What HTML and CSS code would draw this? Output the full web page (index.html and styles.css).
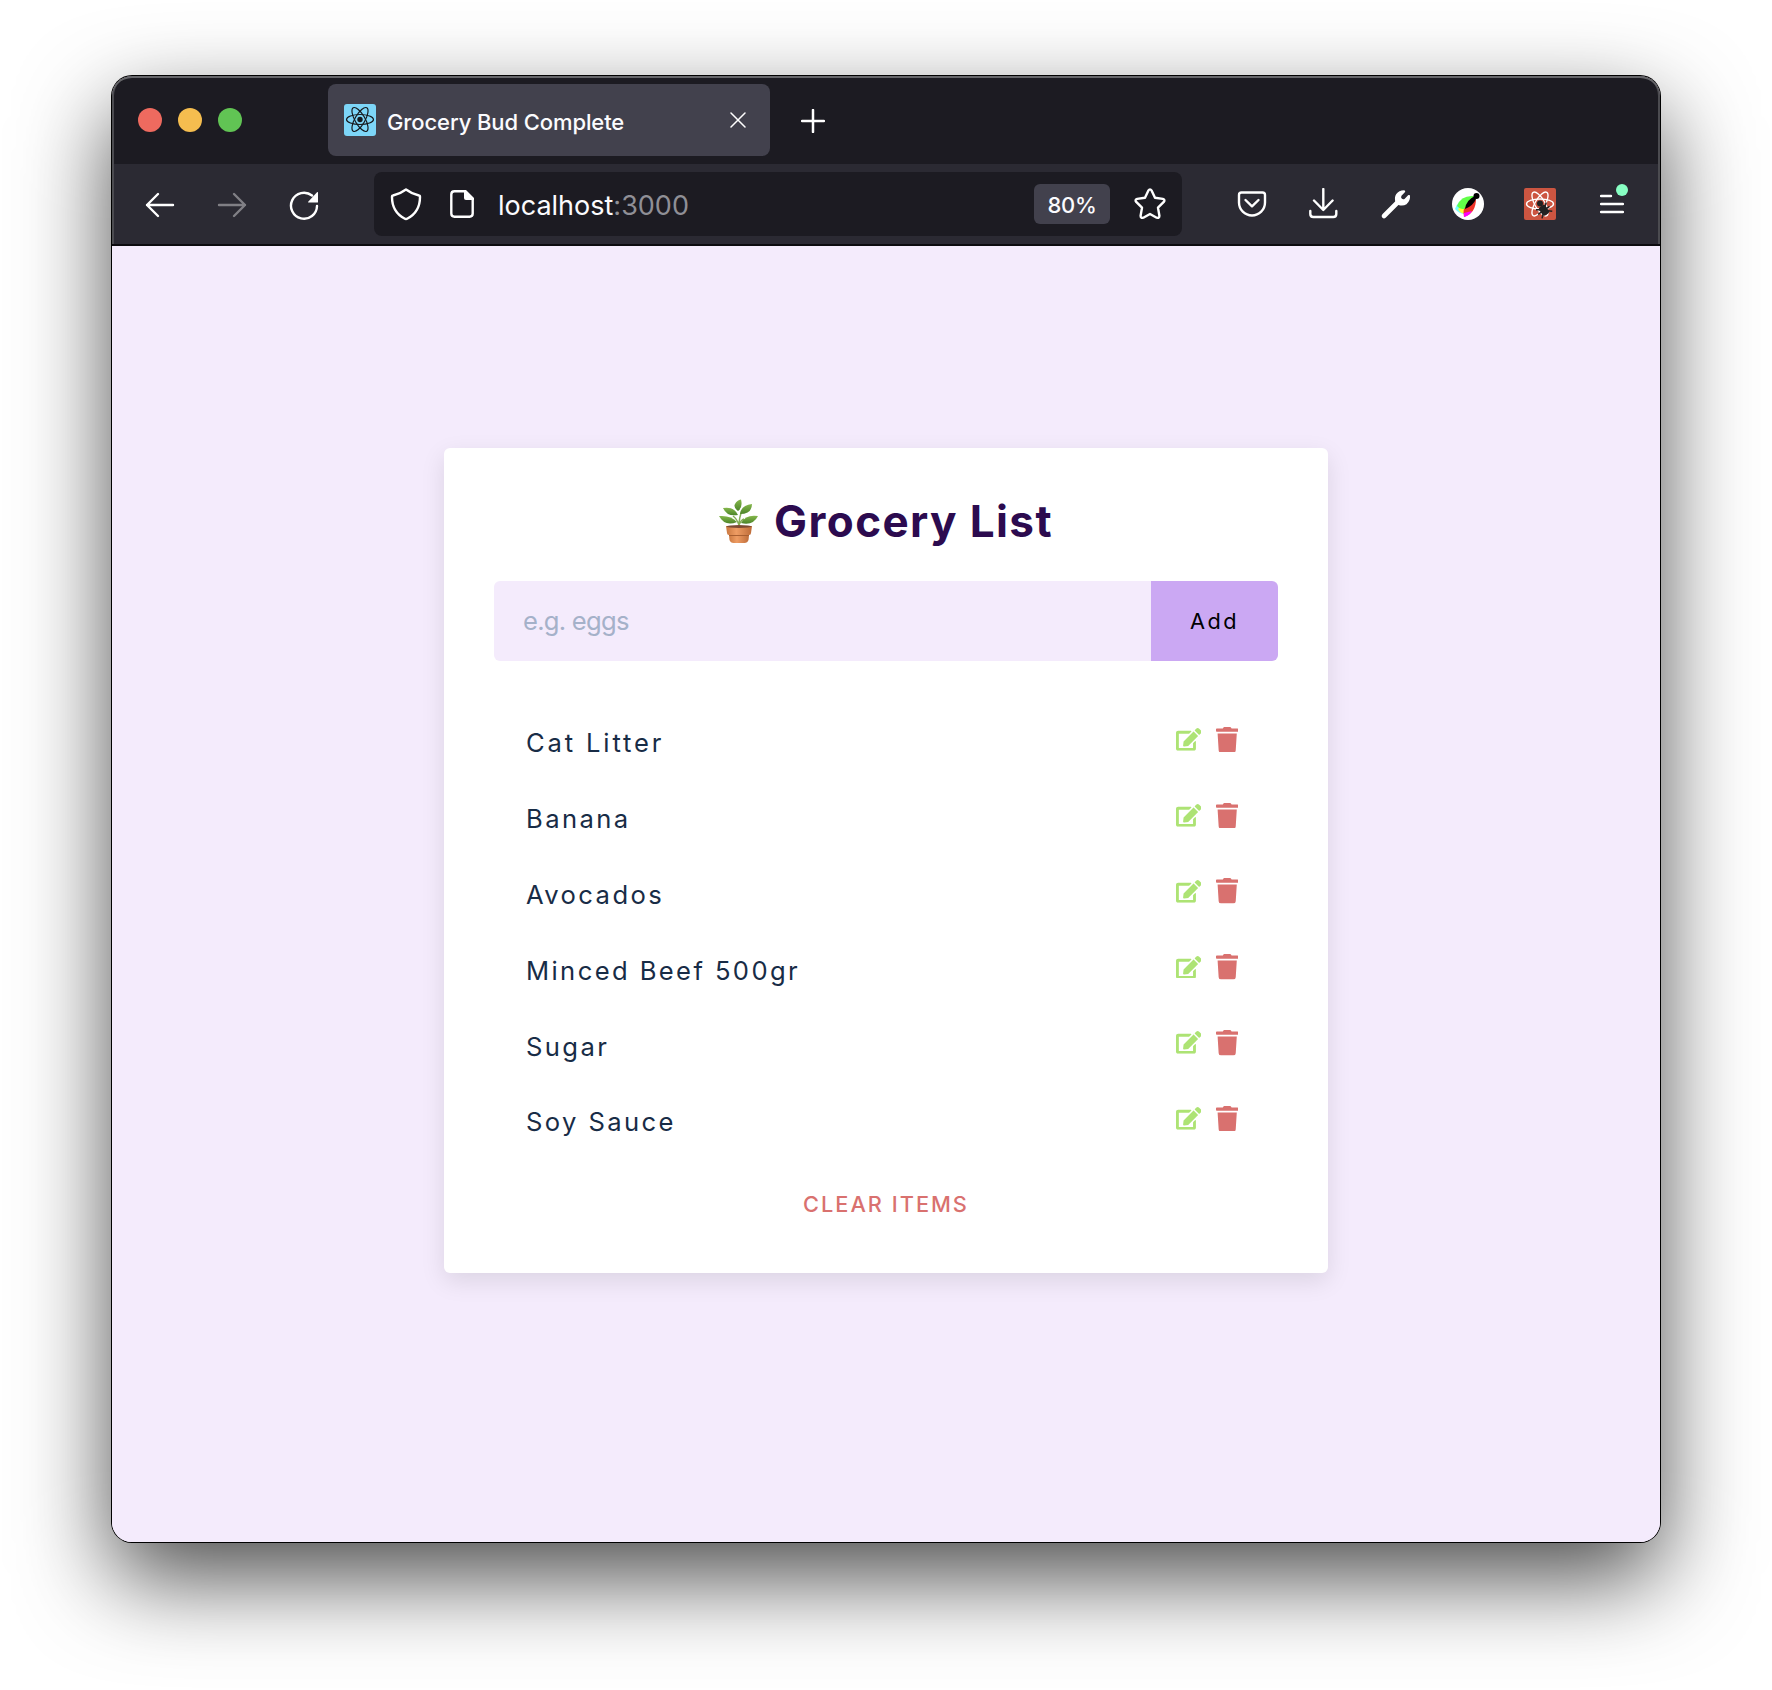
FILE: index.html
```html
<!DOCTYPE html>
<html lang="en">
<head>
<meta charset="utf-8">
<title>Grocery Bud Complete</title>
<link rel="stylesheet" href="styles.css">
</head>
<body>
<svg class="defs" width="0" height="0" aria-hidden="true">
  <symbol id="edit" viewBox="0 0 576 512"><path d="M402.6 83.2l90.2 90.2c3.8 3.8 3.8 10 0 13.8L274.4 405.6l-92.8 10.3c-12.4 1.4-22.9-9.1-21.5-21.5l10.3-92.8L388.8 83.2c3.8-3.8 10-3.8 13.8 0zm162-22.9l-48.8-48.8c-15.2-15.2-39.9-15.2-55.2 0l-35.4 35.4c-3.8 3.8-3.8 10 0 13.8l90.2 90.2c3.8 3.8 10 3.8 13.8 0l35.4-35.4c15.2-15.3 15.2-40 0-55.2zM384 346.2V448H64V128h229.8c3.2 0 6.2-1.3 8.5-3.5l40-40c7.6-7.6 2.2-20.5-8.5-20.5H48C21.5 64 0 85.500 0 112v352c0 26.500 21.500 48 48 48h352c26.500 0 48-21.500 48-48V306.200c0-10.700-12.900-16-20.500-8.500l-40 40c-2.200 2.300-3.500 5.300-3.500 8.500z"/></symbol>
  <symbol id="trash" viewBox="0 0 448 512"><path d="M432 32H312l-9.4-18.7A24 24 0 0 0 281.1 0H166.8a23.72 23.72 0 0 0-21.4 13.3L136 32H16A16 16 0 0 0 0 48v32a16 16 0 0 0 16 16h416a16 16 0 0 0 16-16V48a16 16 0 0 0-16-16zM53.2 467a48 48 0 0 0 47.900 45h245.800a48 48 0 0 0 47.900-45L416 128H32z"/></symbol>
</svg>
<div class="window">
  <header class="tabstrip">
    <div class="lights"><i class="light red"></i><i class="light yellow"></i><i class="light green"></i></div>
    <div class="tab">
      <svg class="favicon" width="32" height="32" viewBox="0 0 32 32"><rect width="32" height="32" rx="3" fill="#7dd6f8"/><g fill="none" stroke="#16191d" stroke-width="1.200"><ellipse cx="16" cy="15.500" rx="13.500" ry="5"/><ellipse cx="16" cy="15.500" rx="13.500" ry="5" transform="rotate(60 16 15.500)"/><ellipse cx="16" cy="15.500" rx="13.500" ry="5" transform="rotate(120 16 15.500)"/></g><circle cx="16" cy="15.500" r="2.700" fill="#16191d"/></svg>
      <span class="tab-title">Grocery Bud Complete</span>
      <svg class="close" width="16" height="16" viewBox="0 0 16 16"><path d="M1 1l14 14M15 1L1 15" stroke="#fff" stroke-width="1.500" stroke-linecap="round"/></svg>
    </div>
    <svg class="plus" width="24" height="24" viewBox="0 0 24 24"><path d="M12 1v22M1 12h22" stroke="#fff" stroke-width="2.500" stroke-linecap="round"/></svg>
  </header>
  <nav class="toolbar">
    <div class="nav-buttons">
      <svg width="32" height="32" viewBox="0 0 32 32"><path d="M29 16H3M14 5L3 16l11 11" class="line"/></svg>
      <svg width="32" height="32" viewBox="0 0 32 32" opacity=".4"><path d="M3 16h26M18 5l11 11-11 11" class="line"/></svg>
      <svg width="32" height="32" viewBox="0 0 32 32"><path d="M29 17A13 13 0 1 1 24 6.500" class="line"/><path d="M30 3.500V13q0 .5-.5.500H20.500q-1 0-.3-.8L29 3.300q1-.8 1 .2z" fill="#fff"/></svg>
    </div>
    <div class="urlbar">
      <svg width="32" height="34" viewBox="0 0 32 34"><path d="M16 2.500Q22 7 29 8.500q1 0 1 1.500c0 9-4 17-12.500 21.500q-1.500 1-3 0C6 27 2 19 2 10q0-1.500 1-1.500Q10 7 16 2.500z" class="line"/></svg>
      <svg class="doc" width="24" height="28" viewBox="0 0 24 28"><path d="M14 1.300H4.500Q1.300 1.300 1.300 4.500v19q0 3.200 3.200 3.200h15q3.200 0 3.200-3.200V10" class="line"/><path d="M14 0h2l8 8v2H16q-2 0-2-2z" fill="#fff"/></svg>
      <span class="url">localhost<span class="port">:3000</span></span>
      <span class="zoom">80%</span>
      <svg class="star" width="32" height="32" viewBox="0 0 32 32"><path d="M14.300 2.700q1.700-2.600 3.400 0l3.300 7 7.800 1.200q2.700.8 1 3l-5.800 5.800 1.400 8q0 2.800-2.700 2L16 26l-6.700 3.700q-2.700.8-2.700-2l1.400-8-5.800-5.800q-1.700-2.200 1-3L11 9.700z" class="line"/></svg>
    </div>
    <div class="actions">
      <svg width="32" height="32" viewBox="0 0 32 32"><path d="M5.500 4.500h21q2.500 0 2.500 2.500v7.500a13 13 0 0 1-26 0V7q0-2.500 2.500-2.500z" class="line"/><path d="M9.500 12l6.500 6.300 6.500-6.300" class="line"/></svg>
      <svg width="32" height="32" viewBox="0 0 32 32"><path d="M15.300 1v20M6 12.500L15.300 22l9.300-9.500M2.300 23v3q0 3 3 3h20q3 0 3-3v-3" class="line"/></svg>
      <svg width="32" height="32" viewBox="0 0 32 32"><path d="M4 28L18 14" stroke="#fff" stroke-width="4.600" stroke-linecap="round"/><path d="M24.500 2.200Q19 2 16.300 6q-2.300 3.500-.8 8.300l3 2.700q4.500 1.500 8-.8Q30.500 13 30 7.300l-1.700-.3-3.800 4q-1.500.8-2.800-.4-1.200-1.300-.2-2.900l3.800-4z" fill="#fff"/></svg>
      <svg width="32" height="32" viewBox="0 0 32 32"><circle cx="16" cy="16" r="16" fill="#fff"/><path d="M3 21Q7 9 23 8L15 26Q8 27 3 21z" fill="#7ff"/><path d="M6 21l9-5 1 9q-7 2-10-4z" fill="#ff3"/><path d="M5 18Q9 7 22 8l-7 13q-6 1-10-3z" fill="#62ff48"/><path d="M24 11q0 14-12 18-2-9 4-12z" fill="#ef3328"/><path d="M12 25l8-2q-3 5-8 6z" fill="#f0f"/><path d="M13 21Q14 12 23 8l1 3q-3 7-11 10z"/><circle cx="24.500" cy="8" r="3"/></svg>
      <svg width="32" height="32" viewBox="0 0 32 32"><rect width="32" height="32" rx="2" fill="#cc5541"/><g fill="none" stroke="#fff" stroke-width="1.400"><ellipse cx="16" cy="16" rx="13.500" ry="5"/><ellipse cx="16" cy="16" rx="13.500" ry="5" transform="rotate(60 16 16)"/><ellipse cx="16" cy="16" rx="13.500" ry="5" transform="rotate(120 16 16)"/></g><circle cx="16" cy="15.500" r="3" fill="#222"/><g transform="rotate(-35 19.500 22)" fill="#222"><rect x="16" y="17.500" width="7.500" height="10" rx="2.500"/><path d="M13.500 17.500l3.500 2.500M26 17.500l-3.500 2.500M12.500 22.500h14M13.500 28l3.500-3M26 28l-3.500-3" stroke="#222" stroke-width="1.500"/></g></svg>
      <span class="menu"><svg width="24" height="20" viewBox="0 0 24 20"><path d="M1 2h10M1 10h22M1 18h22" stroke="#fff" stroke-width="2.400" stroke-linecap="round"/></svg><i class="badge"></i></span>
    </div>
  </nav>
  <main class="page">
    <section class="card">
      <h1 class="heading">
        <svg width="40" height="45" viewBox="0 0 40 45">
          <defs><linearGradient id="pot" x1="0" x2="1"><stop offset="0" stop-color="#c9773f"/><stop offset=".4" stop-color="#ee9c63"/><stop offset="1" stop-color="#bd6b38"/></linearGradient><linearGradient id="leaf" x1="0" y1="0" x2="0" y2="1"><stop offset="0" stop-color="#86b84c"/><stop offset="1" stop-color="#4b8429"/></linearGradient></defs>
          <path d="M20 28Q20 18 23 12M20 26q-2-6-6-9M20 26q2-5 5-6" fill="none" stroke="#83ad55" stroke-width="1.500"/>
          <g fill="url(#leaf)"><path d="M19 12q-5-4-3-7 2-4 6-4.500 2 8-3 11.500z"/><path d="M21 15q1-9 12-10 0 10-12 10z"/><path d="M19 16Q8 18 4 9q11-2 15 7z"/><path d="M18 23Q6 28 0 17q12-1 18 6z"/><path d="M22 24q5-9 17-7-5 10-17 7z"/></g>
          <path d="M9.500 32h21l-1 9q-1 3-4 3h-11q-3 0-4-3z" fill="url(#pot)"/><path d="M7 27h26l-1 7q0 2-2 2H10q-2 0-2-2z" fill="url(#pot)"/><path d="M10 36.500h20" stroke="#a95f31"/><ellipse cx="20" cy="27.500" rx="12.500" ry="1.500" fill="#7d4a33"/>
        </svg>
        <span>Grocery List</span>
      </h1>
      <form class="form">
        <input class="field" type="text" placeholder="e.g. eggs">
        <button class="add" type="button">Add</button>
      </form>
      <ul class="items">
        <li class="item"><span class="wide">Cat Litter</span><span class="tools"><svg class="edit"><use href="#edit"/></svg><svg class="trash"><use href="#trash"/></svg></span></li>
        <li class="item"><span>Banana</span><span class="tools"><svg class="edit"><use href="#edit"/></svg><svg class="trash"><use href="#trash"/></svg></span></li>
        <li class="item"><span>Avocados</span><span class="tools"><svg class="edit"><use href="#edit"/></svg><svg class="trash"><use href="#trash"/></svg></span></li>
        <li class="item"><span>Minced Beef 500gr</span><span class="tools"><svg class="edit"><use href="#edit"/></svg><svg class="trash"><use href="#trash"/></svg></span></li>
        <li class="item"><span>Sugar</span><span class="tools"><svg class="edit"><use href="#edit"/></svg><svg class="trash"><use href="#trash"/></svg></span></li>
        <li class="item"><span>Soy Sauce</span><span class="tools"><svg class="edit"><use href="#edit"/></svg><svg class="trash"><use href="#trash"/></svg></span></li>
      </ul>
      <button class="clear" type="button">CLEAR ITEMS</button>
    </section>
  </main>
</div>
</body>
</html>
```

FILE: styles.css
```css
* { box-sizing: border-box; }
body { margin: 0; padding: 76px 112px 0; height: 1690px; background: #fff; overflow: hidden; font-family: Inter, "Liberation Sans", sans-serif; }
.defs { position: absolute; }
svg { flex: none; display: block; }
.line { fill: none; stroke: #fff; stroke-width: 2.400; stroke-linecap: round; stroke-linejoin: round; }

.window { display: flex; flex-direction: column; width: 1548px; height: 1466px; border-radius: 20px; overflow: hidden; background: #f4ebfc; box-shadow: 0 0 0 1px #000, 0 36px 92px rgba(0,0,0,.7); }

.tabstrip { display: flex; align-items: center; height: 88px; background: #1c1b22; box-shadow: inset 0 2px #66666a, inset 2px 0 #4b4b50, inset -2px 0 #4b4b50; border-radius: 20px 20px 0 0; }
.lights { display: flex; gap: 16px; margin-left: 26px; }
.light { width: 24px; height: 24px; border-radius: 50%; }
.red { background: #ee6a5f; }
.yellow { background: #f5bd4f; }
.green { background: #61c454; }
.tab { display: flex; align-items: center; width: 442px; height: 72px; margin-left: 86px; padding: 0 24px 0 16px; border-radius: 8px; background: #42414d; color: #fbfbfe; }
.tab-title { flex: 1; margin: 4px 0 0 11px; font-size: 22px; font-weight: 500; letter-spacing: -.1px; white-space: nowrap; }
.plus { margin: 2px 0 0 31px; }

.toolbar { display: flex; align-items: center; height: 82px; padding-left: 32px; background: #2b2a33; border-bottom: 2px solid #0c0b0f; box-shadow: inset 2px 0 #4b4b50, inset -2px 0 #4b4b50; }
.nav-buttons { display: flex; gap: 40px; padding-top: 2px; }
.urlbar { display: flex; align-items: center; width: 808px; height: 64px; margin-left: 54px; padding: 0 16px; border-radius: 8px; background: #1c1b22; color: #fbfbfe; }
.doc { margin-left: 28px; }
.url { flex: 1; margin: 2px 0 0 24px; font-size: 27px; }
.port { color: #8f8f96; }
.zoom { display: flex; align-items: center; justify-content: center; width: 76px; height: 40px; padding-top: 2px; border-radius: 6px; background: #42414d; font-size: 22px; font-weight: 500; letter-spacing: -.3px; }
.star { margin-left: 24px; }
.actions { display: flex; align-items: center; gap: 40px; margin-left: 54px; }
.menu { position: relative; margin: -1px 0 0 4px; }
.badge { position: absolute; left: 16px; top: -10px; width: 12px; height: 12px; border-radius: 50%; background: #88ffc4; }

.page { flex: 1; padding: 202px 332px 0; background: #f4ebfc; }
.card { display: flex; flex-direction: column; width: 884px; height: 825px; padding: 49px 50px; border-radius: 6px; background: #fff; box-shadow: 0 8px 24px rgba(0,0,0,.1); }
.heading { display: flex; justify-content: center; align-items: center; gap: 15px; height: 48px; margin: 0; color: #2c0b4f; font-size: 44px; font-weight: 700; letter-spacing: 1.400px; }
.form { display: flex; height: 80px; margin-top: 36px; border-radius: 6px; overflow: hidden; }
.field { flex: 1; border: 0; padding: 0 29px 2px; background: #f4ebfc; font: 25.600px Inter, sans-serif; letter-spacing: -.750px; }
.field::placeholder { color: #a5b1c9; opacity: 1; }
.add { width: 127px; border: 0; padding: 0; background: #cba8f3; color: #000; font: 21.760px Inter, sans-serif; letter-spacing: 2.500px; }
.items { margin: 44px 0 0; padding: 0 40px 0 32px; list-style: none; }
.item { display: flex; align-items: center; justify-content: space-between; height: 75.800px; color: #182c46; font-size: 25.600px; letter-spacing: 2.400px; }
.wide { letter-spacing: 2.850px; }
.tools { display: flex; align-items: center; gap: 14.500px; margin-bottom: 6.500px; }
.edit { width: 25.600px; height: 22.800px; fill: #ade374; }
.trash { width: 22.400px; height: 25.600px; fill: #d9716f; }
.clear { align-self: center; margin-top: 31px; border: 0; padding: 0; background: none; color: #d9716f; font: 500 21.760px Inter, sans-serif; letter-spacing: 2px; }
```
